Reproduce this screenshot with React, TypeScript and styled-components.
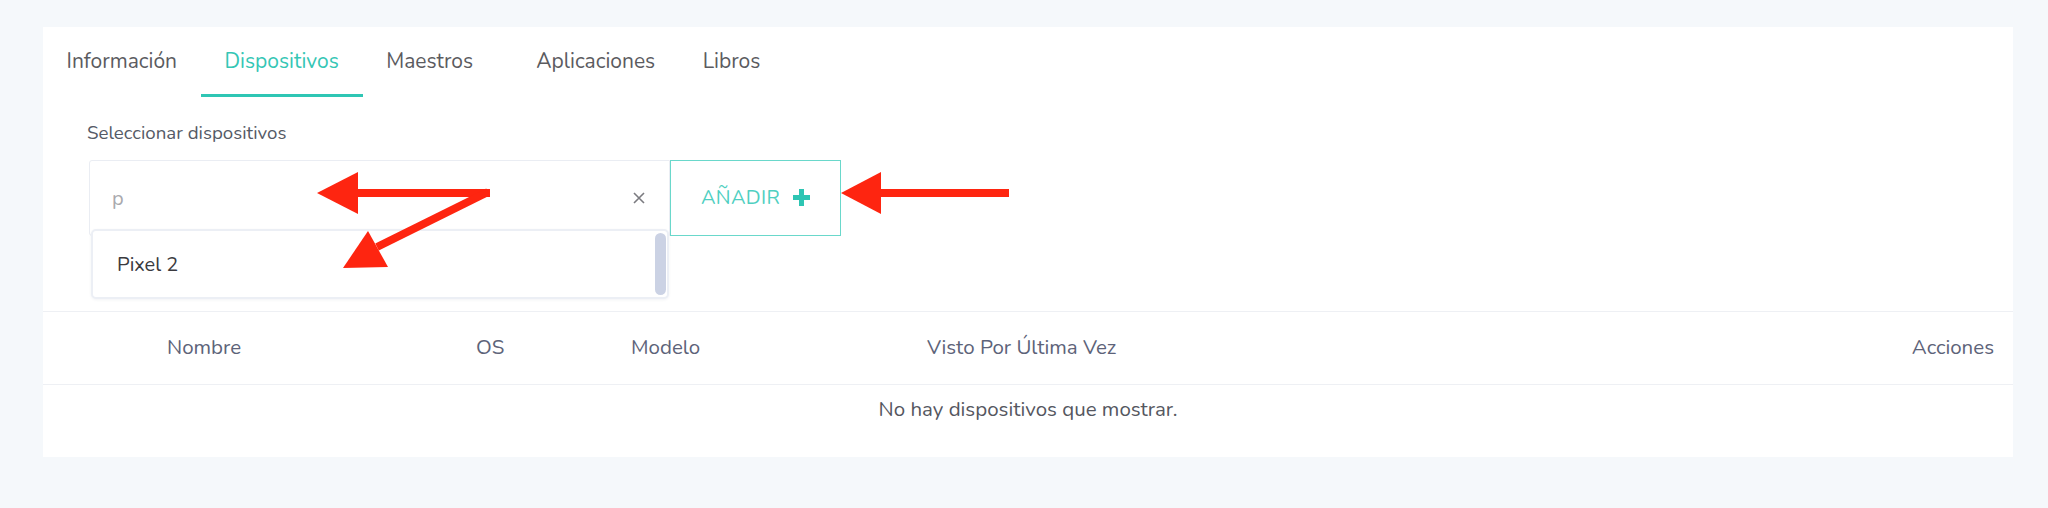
import styled, { createGlobalStyle } from "styled-components"

// #region styled
const Global = createGlobalStyle`
  body {
    margin: 0;
    background: #f5f8fb;
    font-family: "Nunito", "Lato", "Noto Sans", sans-serif;
  }
`

const Page = styled.main`
  position: relative;
  width: 2048px;
  height: 508px;
  padding: 27px 35px 0 43px;
  box-sizing: border-box;
`

const Card = styled.section`
  background: #fff;
  height: 430px;
  display: flex;
  flex-direction: column;
`

const TabBar = styled.nav`
  display: flex;
  height: 70px;
`

const Tab = styled.div<{ $active?: boolean }>`
  display: flex;
  align-items: center;
  min-width: 150px;
  box-sizing: border-box;
  padding: 0 24px 0 23.5px;
  font-size: 21px;
  color: ${(p) => (p.$active ? "#35c6b5" : "#5b5b5f")};
  border-bottom: 3px solid ${(p) => (p.$active ? "#2fc6b4" : "transparent")};
`

const Form = styled.div`
  padding: 24px 0 0 44px;
  height: 190px;
`

const Label = styled.div`
  font-size: 18.7px;
  line-height: 24px;
  color: #555a66;
  margin-bottom: 15px;
`

const Row = styled.div`
  position: relative;
  display: flex;
  margin-left: 2px;
`

const Select = styled.div`
  width: 581px;
  height: 76px;
  box-sizing: border-box;
  border: 1px solid #eaedf3;
  border-radius: 3px 0 0 3px;
  display: flex;
  align-items: center;
  justify-content: space-between;
  padding: 0 24px 0 22px;
  font-size: 20px;
  color: #a9a9ad;
`

const AddButton = styled.button`
  width: 171px;
  height: 76px;
  box-sizing: border-box;
  background: #fff;
  border: 1px solid #6ad8cb;
  display: flex;
  align-items: center;
  justify-content: center;
  gap: 13px;
  font-family: inherit;
  font-size: 20px;
  letter-spacing: 0.3px;
  color: #4fcfc1;
  padding: 0 0 2px;
`

const Menu = styled.div`
  position: absolute;
  top: 69px;
  left: 2px;
  width: 578px;
  height: 70px;
  box-sizing: border-box;
  background: #fff;
  border: 2px solid #eceff5;
  border-radius: 5px;
  box-shadow: 0 1px 3px rgba(40, 50, 80, 0.06);
  display: flex;
  align-items: center;
  justify-content: space-between;
  padding: 0 1px 0 24px;
`

const Option = styled.span`
  font-size: 20px;
  color: #3a3a3e;
`

const Thumb = styled.span`
  width: 11px;
  height: 62px;
  border-radius: 6px;
  background: #cbd2e4;
`

const TableHead = styled.div`
  display: grid;
  grid-template-columns: 124px 309px 155px 296px 1fr auto;
  align-items: center;
  height: 74px;
  padding: 0 19px 2px 0;
  box-sizing: border-box;
  border-top: 1px solid #eef0f4;
  border-bottom: 1px solid #eef0f4;
  font-size: 20.5px;
  color: #5d6379;
`

const Empty = styled.div`
  height: 49px;
  padding-bottom: 2px;
  box-sizing: border-box;
  display: flex;
  align-items: center;
  justify-content: center;
  font-size: 20.5px;
  color: #55575f;
`

const Arrows = styled.svg`
  position: absolute;
  top: 0;
  left: 0;
  pointer-events: none;
`
// #endregion

const tabs = ["Información", "Dispositivos", "Maestros", "Aplicaciones", "Libros"]
const columns = ["", "Nombre", "OS", "Modelo", "Visto Por Última Vez", "Acciones"]

const App = () => {
  return (
    <Page>
      <Global />
      <Card>
        <TabBar>
          {tabs.map((t) => (
            <Tab key={t} $active={t === "Dispositivos"}>
              {t}
            </Tab>
          ))}
        </TabBar>

        <Form>
          <Label>Seleccionar dispositivos</Label>
          <Row>
            <Select>
              <span>p</span>
              <svg width="12" height="12" viewBox="0 0 12 12" aria-hidden="true">
                <path d="M1 1L11 11M11 1L1 11" stroke="#7b7b80" strokeWidth="1.6" />
              </svg>
            </Select>
            <AddButton>
              AÑADIR
              <svg width="17" height="17" viewBox="0 0 17 17" aria-hidden="true">
                <path d="M8.5 0V17M0 8.5H17" stroke="#2ec5b3" strokeWidth="5" />
              </svg>
            </AddButton>
            <Menu>
              <Option>Pixel 2</Option>
              <Thumb />
            </Menu>
          </Row>
        </Form>

        <TableHead>
          {columns.map((c, i) => (
            <span key={i}>{c}</span>
          ))}
        </TableHead>
        <Empty>No hay dispositivos que mostrar.</Empty>
      </Card>

      <Arrows width="2048" height="508" viewBox="0 0 2048 508">
        <g fill="#fe2510" stroke="#fe2510" strokeWidth="8">
          <line x1="490" y1="193" x2="354" y2="193" />
          <polygon points="317,193 358,172 358,214" stroke="none" />
          <line x1="488" y1="192" x2="377" y2="247" />
          <polygon points="343,268 368,231 388,267" stroke="none" />
          <line x1="1009" y1="193" x2="878" y2="193" />
          <polygon points="841,193 881,172 881,214" stroke="none" />
        </g>
      </Arrows>
    </Page>
  )
}

export default App
